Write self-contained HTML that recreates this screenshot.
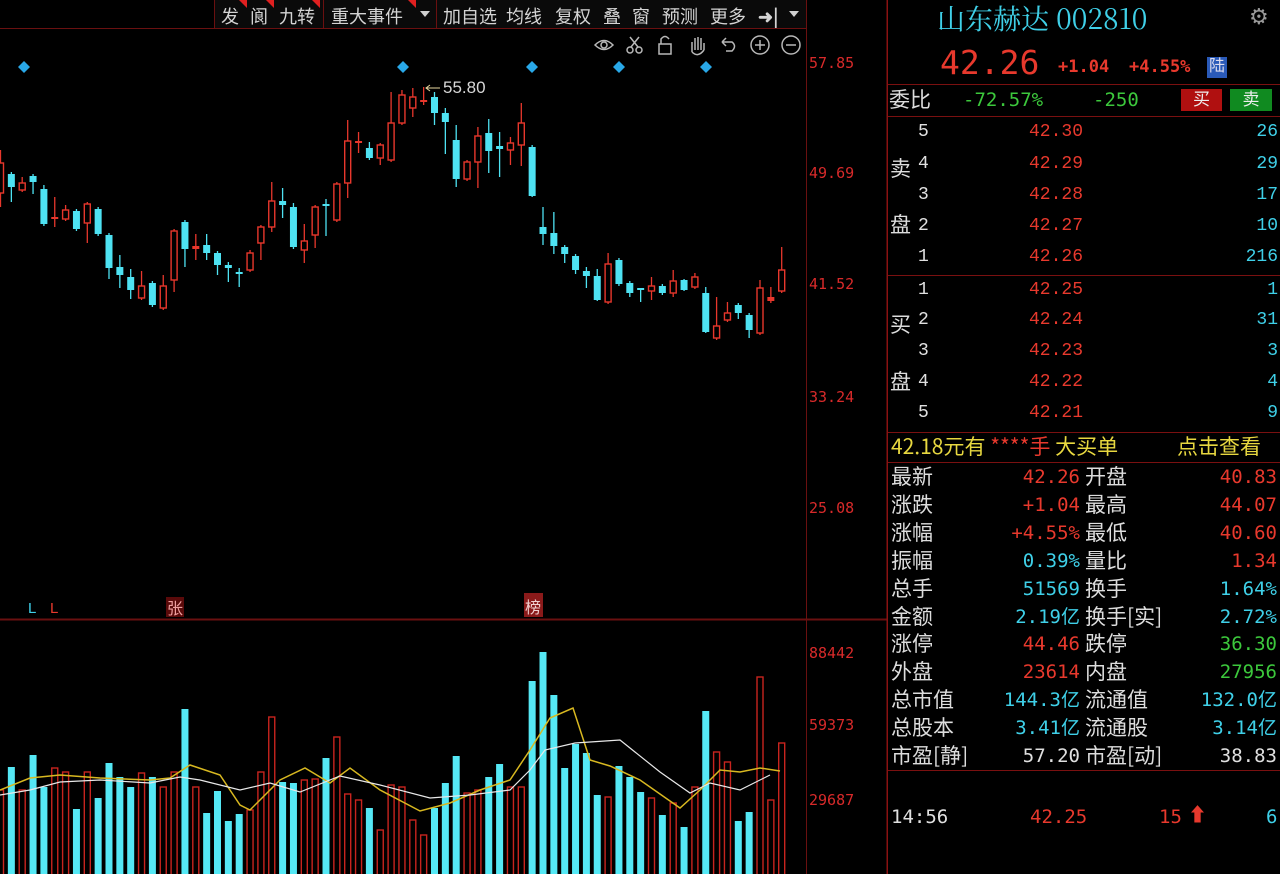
<!DOCTYPE html>
<html><head><meta charset="utf-8">
<style>
*{margin:0;padding:0;box-sizing:border-box}
body{width:1280px;height:874px;background:#000;overflow:hidden;position:relative;font-family:"Liberation Sans","Noto Sans CJK SC",sans-serif;color:#ddd}
.a{position:absolute;white-space:nowrap;line-height:1}
.r{color:#e8392d}.c{color:#3fd0e8}.g{color:#3cc83c}.y{color:#e8d840}.w{color:#e0e0e0}
.tb{position:absolute;top:3px;font-size:18px;color:#d4d4d4;font-family:"Noto Sans CJK SC",sans-serif}
.hl{position:absolute;left:888px;width:392px;height:1px;background:#7a1010}
.ob{font-size:18px;font-family:"Liberation Mono","DejaVu Sans Mono",monospace}
.cn{font-size:21px;font-family:"Noto Sans CJK SC",sans-serif;color:#ddd}
.num{font-size:19px;font-family:"DejaVu Sans Mono",monospace}
</style></head><body>
<svg id="ch" width="888" height="874" style="position:absolute;left:0;top:0">
<rect x="214" y="0" width="592" height="28" fill="#0a0a0a"/>
<line x1="0" y1="28.5" x2="806" y2="28.5" stroke="#6a1010"/>
<line x1="0" y1="619.5" x2="888" y2="619.5" stroke="#6a1010" stroke-width="2"/>
<line x1="806.5" y1="0" x2="806.5" y2="874" stroke="#6a1010"/>
<line x1="887.5" y1="0" x2="887.5" y2="874" stroke="#8a1212" stroke-width="2"/>
<g stroke="#6a1010"><line x1="214.5" y1="0" x2="214.5" y2="28"/><line x1="436.5" y1="0" x2="436.5" y2="28"/><line x1="323.5" y1="0" x2="323.5" y2="28"/></g>
<g fill="#e02020"><polygon points="239,0 247,0 247,8"/><polygon points="266,0 274,0 274,8"/><polygon points="312,0 320,0 320,8"/><polygon points="408,0 416,0 416,8"/></g>
<g fill="#d0d0d0"><polygon points="420,11 430,11 425,17"/><polygon points="789,11 799,11 794,17"/></g>
<g fill="#29a8e8"><polygon points="24,61 30,67 24,73 18,67"/><polygon points="403,61 409,67 403,73 397,67"/><polygon points="532,61 538,67 532,73 526,67"/><polygon points="619,61 625,67 619,73 613,67"/><polygon points="706,61 712,67 706,73 700,67"/></g>
<g stroke="#b8b8b8" fill="none" stroke-width="1.5">
<path d="M595 45 Q604 36 613 45 Q604 54 595 45Z"/><circle cx="604" cy="45" r="3"/>
<circle cx="630" cy="50" r="3"/><circle cx="639" cy="50" r="3"/><path d="M631 47 L639 37 M638 47 L630 37"/>
<rect x="659" y="44" width="12" height="10"/><path d="M661 44 V39 Q665 34 669 39"/>
<path d="M692 52 V42 M695 50 V38 M698 50 V37 M701 50 V38 M704 50 V43 M692 52 Q698 58 704 50"/>
<path d="M722 42 H732 Q737 46 732 51 H726 M722 42 L726 38 M722 42 L726 46"/>
<circle cx="760" cy="45" r="9"/><path d="M755 45 H765 M760 40 V50"/>
<circle cx="791" cy="45" r="9"/><path d="M786 45 H796"/>
</g>
<g id="cd"></g>
<g id="vl"></g>
<polyline fill="none" stroke="#d8b820" stroke-width="1.5" points="0,790 30,778 60,775 100,778 150,780 170,778 190,765 220,775 240,805 250,810 280,780 305,768 330,783 350,768 380,790 420,811 450,803 480,790 510,780 530,750 550,718 573,708 590,760 610,766 640,780 680,808 700,790 720,770 740,772 760,768 780,771"/>
<polyline fill="none" stroke="#e8e8e8" stroke-width="1.2" points="0,795 30,790 60,782 100,780 150,783 180,777 200,780 240,790 270,783 300,792 340,776 380,785 430,798 470,795 510,790 530,770 545,750 575,743 620,740 660,772 690,793 710,783 740,790 770,775"/>
<path d="M440 88 H426 M430 85 L426 88 L430 91" stroke="#e8d8a0" fill="none"/>
<text x="443" y="93" font-size="17" fill="#d8d8d8" font-family="Liberation Sans">55.80</text>
<g fill="#d82a2a" font-size="15" font-family="DejaVu Sans Mono">
<text x="809" y="68">57.85</text><text x="809" y="178">49.69</text><text x="809" y="289">41.52</text><text x="809" y="402">33.24</text><text x="809" y="513">25.08</text>
<text x="809" y="658">88442</text><text x="809" y="730">59373</text><text x="809" y="805">29687</text></g>
<text x="28" y="613" font-size="15" fill="#3fd0e8">L</text><text x="50" y="613" font-size="15" fill="#e8392d">L</text>
<rect x="166" y="597" width="18" height="20" fill="#5a0a0a"/><text x="167" y="614" font-size="16" fill="#f0a0a0" font-family="Noto Sans CJK SC">张</text>
<rect x="524" y="593" width="19" height="24" fill="#8a1a1a"/><text x="525" y="613" font-size="16" fill="#f0d0d0" font-family="Noto Sans CJK SC">榜</text>
</svg>
<div class="tb" style="left:221px">发</div>
<div class="tb" style="left:250px">阆</div>
<div class="tb" style="left:279px">九转</div>
<div class="tb" style="left:331px">重大事件</div>
<div class="tb" style="left:443px">加自选</div>
<div class="tb" style="left:506px">均线</div>
<div class="tb" style="left:555px">复权</div>
<div class="tb" style="left:603px">叠</div>
<div class="tb" style="left:632px">窗</div>
<div class="tb" style="left:662px">预测</div>
<div class="tb" style="left:710px">更多</div>
<div class="tb" style="left:758px;font-weight:bold">➜|</div>

<div class="a c" style="left:937px;top:4px;font-size:28px;font-family:'Noto Serif CJK SC',serif">山东赫达 002810</div>
<div class="a" style="left:1249px;top:6px;font-size:22px;color:#999">⚙</div>
<div class="a r" style="left:940px;top:46px;font-size:33px;font-family:'DejaVu Sans Mono',monospace">42.26</div>
<div class="a r" style="left:1058px;top:59px;font-size:17px;font-family:'DejaVu Sans Mono',monospace;font-weight:bold">+1.04</div>
<div class="a r" style="left:1129px;top:59px;font-size:17px;font-family:'DejaVu Sans Mono',monospace;font-weight:bold">+4.55%</div>
<div class="a" style="left:1207px;top:57px;width:20px;height:21px;background:#2a5ab8;color:#dde;font-size:16px;text-align:center;padding-top:2px">陆</div>
<div class="hl" style="top:84px"></div>
<div class="a cn" style="left:889px;top:89px">委比</div>
<div class="a g num" style="left:963px;top:91px">-72.57%</div>
<div class="a g num" style="left:1093px;top:91px">-250</div>
<div class="a" style="left:1181px;top:89px;width:41px;height:22px;background:#b01010;color:#eee;font-size:17px;text-align:center;padding-top:2px">买</div>
<div class="a" style="left:1230px;top:89px;width:42px;height:22px;background:#108a20;color:#eee;font-size:17px;text-align:center;padding-top:2px">卖</div>
<div class="hl" style="top:116px"></div>
<div id="ob"></div>
<div class="a cn" style="left:890px;top:158px">卖</div>
<div class="a cn" style="left:890px;top:214px">盘</div>
<div class="hl" style="top:275px"></div>
<div class="a cn" style="left:890px;top:314px">买</div>
<div class="a cn" style="left:890px;top:371px">盘</div>
<div class="hl" style="top:432px"></div>
<div class="a" style="left:891px;top:436px;font-size:21px;font-family:'Noto Sans CJK SC',sans-serif"><span class="y">42.18元有</span> <span class="r">****手</span> <span class="y">大买单</span></div>
<div class="a y" style="left:1177px;top:436px;font-size:21px;font-family:'Noto Sans CJK SC',sans-serif">点击查看</div>
<div class="hl" style="top:462px"></div>
<div id="st"></div>
<div class="hl" style="top:770px"></div>
<div class="a w num" style="left:891px;top:808px">14:56</div>
<div class="a r num" style="left:1030px;top:808px">42.25</div>
<div class="a r num" style="left:1159px;top:808px">15</div>
<div class="a r" style="left:1188px;top:806px;font-size:19px">⬆</div>
<div class="a c num" style="left:1266px;top:808px">6</div>
<script>
var NS="http://www.w3.org/2000/svg";
function el(p,t,a){var e=document.createElementNS(NS,t);for(var k in a)e.setAttribute(k,a[k]);p.appendChild(e);return e;}
var C=[['r',163,193,150,207],['c',174,187,172,202],['r',183,190,177,192],['c',176,182,174,194],['c',189,224,185,226],['r',217,219,197,227],['r',210,219,205,221],['c',211,229,209,231],['r',204,223,202,243],['c',209,234,207,236],['c',235,268,233,279],['c',267,275,255,288],['c',277,290,269,299],['r',286,298,271,300],['c',283,305,281,307],['r',286,308,275,310],['r',231,280,229,292],['c',222,249,220,267],['r',246,249,234,260],['c',245,253,234,260],['c',253,265,251,275],['c',265,268,262,282],['c',272,274,268,287],['r',253,270,250,272],['r',227,243,225,260],['r',201,227,182,232],['c',201,205,188,218],['c',207,247,203,249],['r',241,250,224,263],['r',207,235,205,248],['c',204,206,199,236],['r',184,220,182,222],['r',141,183,120,198],['r',141,143,132,153],['c',148,158,142,160],['r',145,158,143,165],['r',123,160,92,162],['r',95,123,90,125],['r',97,108,88,117],['r',100,102,87,105],['c',97,113,92,125],['c',113,122,108,154],['c',140,179,125,187],['r',162,179,160,181],['r',136,162,127,188],['c',133,151,119,173],['c',146,149,132,177],['r',143,150,137,165],['r',123,145,103,166],['c',147,196,145,197],['c',227,234,207,245],['c',233,246,212,254],['c',247,254,245,263],['c',256,270,254,274],['c',271,276,267,288],['c',276,300,269,301],['r',264,302,253,304],['c',260,284,258,286],['c',283,293,281,297],['c',288,290,288,302],['r',286,291,277,300],['c',286,293,284,295],['r',281,293,270,297],['c',280,290,279,291],['r',277,287,273,289],['c',293,332,287,333],['r',326,338,297,340],['r',313,320,302,322],['c',305,313,303,319],['c',315,330,313,338],['r',288,333,280,335],['r',297,301,287,303],['r',270,291,247,293]];
var cd=document.getElementById('cd');
C.forEach(function(d,i){var x=0.5+i*10.85,col=d[0]=='r'?'#e8372c':'#4ee2f2';
el(cd,'line',{x1:x,x2:x,y1:d[3],y2:d[4],stroke:col,'stroke-width':1.3});
var h=Math.max(d[2]-d[1],2);
if(d[0]=='r'&&h>4)el(cd,'rect',{x:x-3,y:d[1],width:6,height:h,fill:'#000',stroke:col,'stroke-width':1.4});
else el(cd,'rect',{x:x-3.5,y:d[1],width:7,height:h,fill:col});});
var cy={1:767,3:755,4:787,7:809,9:798,10:763,11:777,12:787,14:777,17:709,19:813,20:791,21:821,22:814,26:782,27:783,30:758,34:808,40:808,41:783,42:756,45:777,46:764,49:681,50:652,51:695,52:768,53:744,54:753,55:795,57:766,58:777,59:792,61:815,63:827,65:711,68:821,69:812};
var ry={0:790,2:790,5:768,6:772,8:772,13:773,15:787,16:772,18:787,23:810,24:772,25:717,28:780,29:779,31:737,32:794,33:800,35:830,36:785,37:787,38:820,39:835,43:793,44:790,47:787,48:787,56:797,60:798,62:803,64:787,66:752,67:762,70:677,71:800,72:743};
var vl=document.getElementById('vl');
for(var i=0;i<73;i++){var x=0.5+i*10.85;
if(cy[i])el(vl,'rect',{x:x-3.5,y:cy[i],width:7,height:874-cy[i],fill:'#55e8f5'});
else if(ry[i])el(vl,'rect',{x:x-3,y:ry[i],width:6,height:880-ry[i],fill:'#000',stroke:'#c8241e','stroke-width':1.4});}
var ob=document.getElementById('ob'),h='';
var rows=[[133,5,'42.30',26],[165,4,'42.29',29],[196,3,'42.28',17],[227,2,'42.27',10],[258,1,'42.26',216],[291,1,'42.25',1],[321,2,'42.24',31],[352,3,'42.23',3],[383,4,'42.22',4],[414,5,'42.21',9]];
rows.forEach(function(r){var t=r[0]-10;
h+='<div class="a ob w" style="left:918px;top:'+t+'px">'+r[1]+'</div><div class="a ob r" style="left:1029px;top:'+t+'px">'+r[2]+'</div><div class="a ob c" style="right:2px;top:'+t+'px">'+r[3]+'</div>';});
ob.innerHTML=h;
var S=[['最新','42.26','r','开盘','40.83','r'],['涨跌','+1.04','r','最高','44.07','r'],['涨幅','+4.55%','r','最低','40.60','r'],['振幅','0.39%','c','量比','1.34','r'],['总手','51569','c','换手','1.64%','c'],['金额','2.19亿','c','换手[实]','2.72%','c'],['涨停','44.46','r','跌停','36.30','g'],['外盘','23614','r','内盘','27956','g'],['总市值','144.3亿','c','流通值','132.0亿','c'],['总股本','3.41亿','c','流通股','3.14亿','c'],['市盈[静]','57.20','w','市盈[动]','38.83','w']];
h='';S.forEach(function(s,i){var t=466+i*27.9;
h+='<div class="a cn" style="left:891px;top:'+t+'px">'+s[0]+'</div><div class="a num '+s[2]+'" style="right:200px;top:'+(t+2)+'px">'+s[1]+'</div><div class="a cn" style="left:1085px;top:'+t+'px">'+s[3]+'</div><div class="a num '+s[5]+'" style="right:3px;top:'+(t+2)+'px">'+s[4]+'</div>';});
document.getElementById('st').innerHTML=h;
</script>
</body></html>
